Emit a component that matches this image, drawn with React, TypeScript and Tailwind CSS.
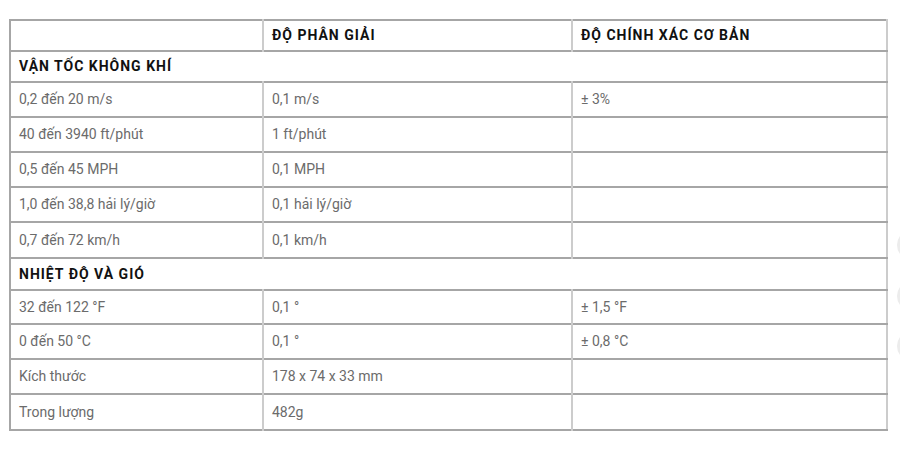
import React from "react";

type Row =
  | { kind: "section"; label: string; h: number }
  | { kind: "data"; cells: [string, string, string]; h: number };

const rows: Row[] = [
  { kind: "section", label: "VẬN TỐC KHÔNG KHÍ", h: 31 },
  { kind: "data", cells: ["0,2 đến 20 m/s", "0,1 m/s", "± 3%"], h: 35 },
  { kind: "data", cells: ["40 đến 3940 ft/phút", "1 ft/phút", ""], h: 35 },
  { kind: "data", cells: ["0,5 đến 45 MPH", "0,1 MPH", ""], h: 35 },
  { kind: "data", cells: ["1,0 đến 38,8 hải lý/giờ", "0,1 hải lý/giờ", ""], h: 35 },
  { kind: "data", cells: ["0,7 đến 72 km/h", "0,1 km/h", ""], h: 36 },
  { kind: "section", label: "NHIỆT ĐỘ VÀ GIÓ", h: 32 },
  { kind: "data", cells: ["32 đến 122 °F", "0,1 °", "± 1,5 °F"], h: 34 },
  { kind: "data", cells: ["0 đến 50 °C", "0,1 °", "± 0,8 °C"], h: 35 },
  { kind: "data", cells: ["Kích thước", "178 x 74 x 33 mm", ""], h: 35 },
  { kind: "data", cells: ["Trong lượng", "482g", ""], h: 36 },
];

export default function App() {
  return (
    <div
      className="relative w-[900px] h-[450px] bg-white overflow-hidden"
      style={{ fontFamily: "Roboto, 'Noto Sans', Arial, sans-serif" }}
    >
      <div className="pt-[19px] pl-[9px]">
        <table className="w-[877px] border-collapse table-fixed border-t-2 border-t-[#a6a6a6] border-l-2 border-l-[#a6a6a6] border-r-2 border-r-[#cccccc]">
          <colgroup>
            <col className="w-[253px]" />
            <col className="w-[309px]" />
            <col className="w-[315px]" />
          </colgroup>
          <tbody>
            <tr className="h-[31px] border-b-2 border-b-[#a6a6a6]">
              <td className="border-r-2 border-r-[#cccccc] px-2"></td>
              <td className="border-r-2 border-r-[#cccccc] px-2 text-[14px] font-bold tracking-[1px] text-[#111111]">
                ĐỘ PHÂN GIẢI
              </td>
              <td className="px-2 text-[14px] font-bold tracking-[1px] text-[#111111]">
                ĐỘ CHÍNH XÁC CƠ BẢN
              </td>
            </tr>
            {rows.map((r, i) =>
              r.kind === "section" ? (
                <tr
                  key={i}
                  className="border-b-2 border-b-[#a6a6a6]"
                  style={{ height: r.h }}
                >
                  <td
                    colSpan={3}
                    className="px-2 text-[14px] font-bold tracking-[1px] text-[#111111]"
                  >
                    {r.label}
                  </td>
                </tr>
              ) : (
                <tr
                  key={i}
                  className="border-b-2 border-b-[#a6a6a6]"
                  style={{ height: r.h }}
                >
                  <td className="border-r-2 border-r-[#cccccc] px-2 text-[14px] text-[#6b6b6b]">
                    {r.cells[0]}
                  </td>
                  <td className="border-r-2 border-r-[#cccccc] px-2 text-[14px] text-[#6b6b6b]">
                    {r.cells[1]}
                  </td>
                  <td className="px-2 text-[14px] text-[#6b6b6b]">{r.cells[2]}</td>
                </tr>
              )
            )}
          </tbody>
        </table>
      </div>
      <div className="absolute left-[897px] top-[230px] w-[30px] h-[30px] rounded-full bg-[#ececec]" />
      <div className="absolute left-[897px] top-[281px] w-[30px] h-[30px] rounded-full bg-[#ececec]" />
      <div className="absolute left-[897px] top-[331px] w-[30px] h-[30px] rounded-full bg-[#ececec]" />
    </div>
  );
}
